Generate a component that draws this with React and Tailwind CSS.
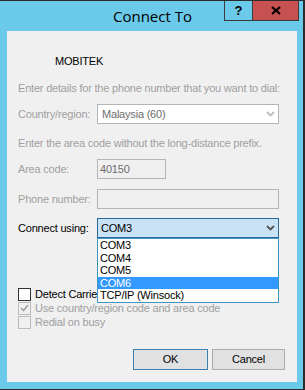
import { useState } from "react";

function Chevron({ color = "#7a7a7a" }) {
  return (
    <svg width="9" height="6" viewBox="0 0 9 6" className="shrink-0">
      <path d="M1 1 L4.5 4.5 L8 1" stroke={color} strokeWidth="1.8" fill="none" />
    </svg>
  );
}

function Check({ checked, disabled }) {
  return (
    <div
      className={`w-[13px] h-[13px] border flex items-center justify-center ${
        disabled ? "border-[#bcbcbc] bg-[#f0f0f0]" : "border-[#333333] bg-white"
      }`}
    >
      {checked && (
        <svg width="9" height="8" viewBox="0 0 9 8">
          <path d="M1 4 L3.5 6.5 L8 1" stroke="#a0a0a0" strokeWidth="1.6" fill="none" />
        </svg>
      )}
    </div>
  );
}

function App() {
  const [port] = useState("COM3");
  const ports = ["COM3", "COM4", "COM5", "COM6", "TCP/IP (Winsock)"];

  return (
    <div
      className="w-[305px] h-[390px] bg-[#6bc9e9] border-t border-b border-r-2 border-[#2b2b2b] flex flex-col"
      style={{ fontFamily: '"Liberation Sans", Arial, sans-serif' }}
    >
      {/* title bar */}
      <div className="h-[30px] relative flex items-center justify-center shrink-0">
        <span
          className="text-[15px] text-black ml-[2px]"
          style={{ fontFamily: '"Open Sans", "Noto Sans", sans-serif' }}
        >
          Connect To
        </span>
        <div className="absolute top-0 right-[4px] flex h-[20px] border border-t-0 border-[#3a3a3a]">
          <div className="w-[28px] flex items-center justify-center border-r border-[#3a3a3a] text-[13px] font-bold text-black">
            ?
          </div>
          <div className="w-[45px] bg-[#c75050] flex items-center justify-center">
            <svg width="10" height="9" viewBox="0 0 10 9">
              <path d="M1 1 L9 8 M9 1 L1 8" stroke="#000" strokeWidth="2.2" />
            </svg>
          </div>
        </div>
      </div>

      {/* client area */}
      <div className="ml-[7px] w-[290px] h-[351px] bg-[#f0f0f0] text-[11px] tracking-[-0.2px] flex flex-col">
        <div className="mt-[23px] h-[14px] leading-[14px] pl-[48px] text-black">MOBITEK</div>

        <div className="mt-[13px] h-[14px] leading-[14px] pl-[11px] text-[#a0a0a0]">
          Enter details for the phone number that you want to dial:
        </div>

        <div className="mt-[9px] h-[20px] flex items-center">
          <div className="w-[90px] pl-[11px] text-[#a0a0a0]">Country/region:</div>
          <div className="w-[182px] h-[20px] border border-[#b5b5b5] bg-white flex items-center justify-between pl-[4px] pr-[3px]">
            <span className="text-[#6d6d6d]">Malaysia (60)</span>
            <Chevron color="#bdbdbd" />
          </div>
        </div>

        <div className="mt-[12px] h-[14px] leading-[14px] pl-[11px] text-[#a0a0a0]">
          Enter the area code without the long-distance prefix.
        </div>

        <div className="mt-[9px] h-[20px] flex items-center">
          <div className="w-[90px] pl-[11px] text-[#a0a0a0]">Area code:</div>
          <div className="w-[69px] h-[20px] border border-[#b5b5b5] bg-[#f0f0f0] flex items-center pl-[2px]">
            <span className="text-[#6d6d6d]">40150</span>
          </div>
        </div>

        <div className="mt-[10px] h-[20px] flex items-center">
          <div className="w-[90px] pl-[11px] text-[#a0a0a0]">Phone number:</div>
          <div className="w-[182px] h-[20px] border border-[#b5b5b5] bg-[#f0f0f0]" />
        </div>

        <div className="mt-[9px] h-[20px] flex items-center">
          <div className="w-[90px] pl-[11px] text-black">Connect using:</div>
          <div className="relative w-[182px] h-[20px]">
            <div className="h-full border border-[#2c6a9b] bg-[#c9e2f5] flex items-center justify-between pl-[3px] pr-[3px]">
              <span className="text-black">{port}</span>
              <Chevron color="#555555" />
            </div>
            <div className="absolute top-[20px] left-0 w-[182px] border border-[#3f95c1] bg-white z-10">
              {ports.map((p) => (
                <div
                  key={p}
                  className={`h-[12.6px] leading-[13px] pl-[2px] ${
                    p === "COM6" ? "bg-[#3399ff] text-white" : "text-black"
                  }`}
                >
                  {p}
                </div>
              ))}
            </div>
          </div>
        </div>

        <div className="mt-[49px] flex flex-col pl-[11px]">
          <div className="h-[14px] flex items-center gap-[4px]">
            <Check />
            <span className="text-black w-[62px] overflow-hidden whitespace-nowrap">Detect Carrier Loss</span>
          </div>
          <div className="h-[14px] flex items-center gap-[4px]">
            <Check checked disabled />
            <span className="text-[#a0a0a0]">Use country/region code and area code</span>
          </div>
          <div className="h-[14px] flex items-center gap-[4px]">
            <Check disabled />
            <span className="text-[#a0a0a0]">Redial on busy</span>
          </div>
        </div>

        <div className="mt-[20px] flex justify-end gap-[4px] pr-[12px]">
          <button className="w-[75px] h-[21px] border border-[#3c7fb1] bg-[#e1e1e1] text-black">OK</button>
          <button className="w-[73px] h-[21px] border border-[#adadad] bg-[#e1e1e1] text-black">Cancel</button>
        </div>
      </div>
    </div>
  );
}

export default App;
